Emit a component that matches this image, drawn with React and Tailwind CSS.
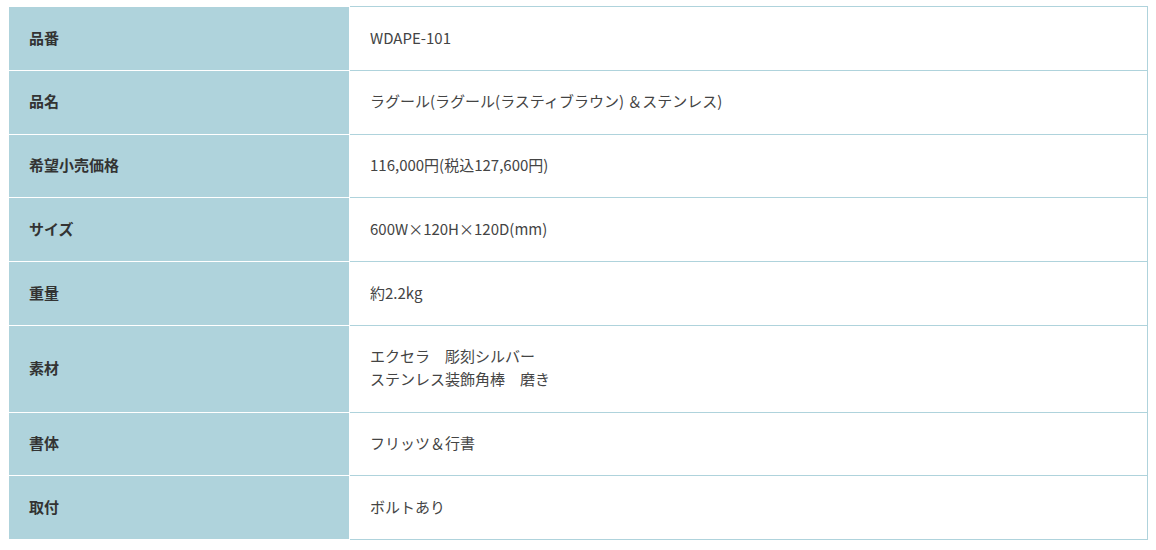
const rows = [
  { label: '品番', value: ['WDAPE-101'] },
  { label: '品名', value: ['ラグール(ラグール(ラスティブラウン) ＆ステンレス)'] },
  { label: '希望小売価格', value: ['116,000円(税込127,600円)'] },
  { label: 'サイズ', value: ['600W×120H×120D(mm)'] },
  { label: '重量', value: ['約2.2kg'] },
  { label: '素材', value: ['エクセラ　彫刻シルバー', 'ステンレス装飾角棒　磨き'] },
  { label: '書体', value: ['フリッツ＆行書'] },
  { label: '取付', value: ['ボルトあり'] },
];

// Product spec table
export default function App() {
  return (
    <div className="bg-white w-[1156px] h-[550px] pt-[6px] pl-[9px]" style={{ fontFamily: '"Noto Sans CJK JP", "Noto Sans", sans-serif' }}>
      <div className="w-[1139px] flex flex-col">
        {rows.map((row, i) => {
          const last = i === rows.length - 1;
          return (
            <div key={row.label} className="flex">
              <div
                className={`w-[341px] shrink-0 bg-[#afd3dc] border-t border-r border-white px-5 pt-[19.5px] pb-[20.5px] text-[15px] leading-[22.8px] font-bold text-[#333] flex items-center ${last ? 'border-b' : ''}`}
              >
                {row.label}
              </div>
              <div
                className={`flex-1 border-t border-r border-[#afd3dc] px-5 pt-[19.5px] pb-[20.5px] text-[15px] leading-[22.8px] text-[#444] ${last ? 'border-b' : ''}`}
              >
                {row.value.map((line) => (
                  <div key={line}>{line}</div>
                ))}
              </div>
            </div>
          );
        })}
      </div>
    </div>
  );
}
